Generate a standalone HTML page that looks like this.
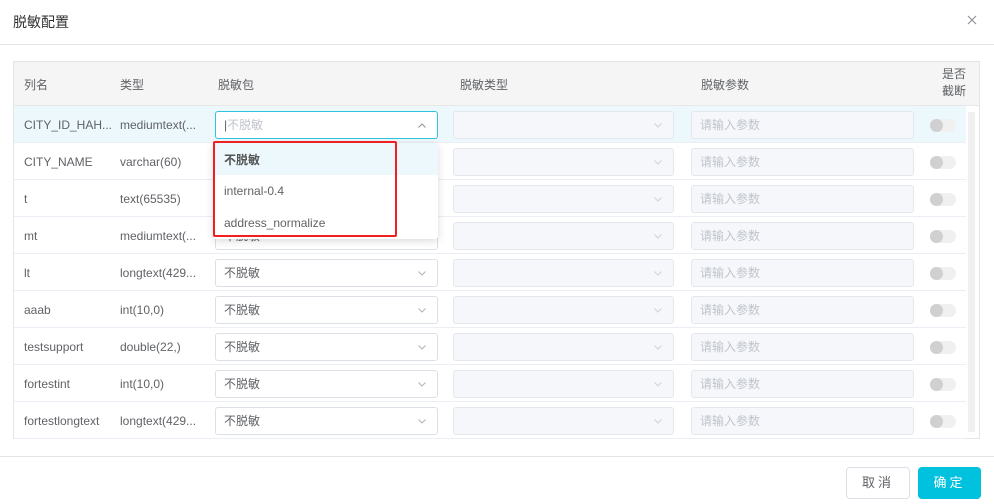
<!DOCTYPE html>
<html><head><meta charset="utf-8"><style>
*{box-sizing:border-box;margin:0;padding:0}
body{width:994px;height:504px;background:#fff;font-family:"Liberation Sans","Noto Sans CJK SC",sans-serif;font-size:12px;color:#606266;position:relative;overflow:hidden}
.a{position:absolute}
.title{left:13px;top:12px;font-size:14px;color:#303133}
.hl{left:0;top:44px;width:994px;height:1px;background:#e4e4e4}
.box{left:13px;top:61px;width:967px;height:378px;border:1px solid #e4e4e4}
.th{left:14px;top:62px;width:965px;height:44px;background:#f5f5f5;border-bottom:1px solid #e8e8e8}
.htxt{top:76px;color:#606266}
.row{left:14px;width:952px;height:37px;border-bottom:1px solid #ebeef5}
.sel{width:223px;height:28px;border:1px solid #dcdfe6;border-radius:3px;background:#fff;padding-left:8px;line-height:26px;color:#606266}
.dis{width:221px;height:28px;border:1px solid #e4e7ed;border-radius:3px;background:#f5f7fa;padding-left:8px;line-height:26px;color:#c0c4cc}
.sel svg,.dis svg{position:absolute;right:11px;top:11px}
.tg{width:26px;height:13px;border-radius:7px;background:#f0f0f0}
.tg:before{content:"";position:absolute;left:0;top:0;width:13px;height:13px;border-radius:50%;background:#d0d0d0}
.btn{top:467px;height:32px;border-radius:4px;text-align:center;line-height:32px;font-size:13px;letter-spacing:3px}
</style></head><body>
<div class="a title">脱敏配置</div>
<svg class="a" style="left:967px;top:15px" width="10" height="10" viewBox="0 0 10 10"><path d="M1 1L9 9M9 1L1 9" stroke="#909399" stroke-width="1.2"/></svg>
<div class="a hl"></div>
<div class="a box"></div>
<div class="a th"></div>
<div class="a htxt" style="left:24px">列名</div>
<div class="a htxt" style="left:120px">类型</div>
<div class="a htxt" style="left:218px">脱敏包</div>
<div class="a htxt" style="left:460px">脱敏类型</div>
<div class="a htxt" style="left:701px">脱敏参数</div>
<div class="a" style="left:942px;top:66px;line-height:17px">是否<br>截断</div>
<div class="a" style="left:968px;top:112px;width:7px;height:320px;background:#f0f0f0"></div>

<div class="a row" style="top:106px;background:#ecf8fc"></div>
<div id="rows"></div>
<script>
var R=[["CITY_ID_HAH...","mediumtext(..."],["CITY_NAME","varchar(60)"],["t","text(65535)"],["mt","mediumtext(..."],["lt","longtext(429..."],["aaab","int(10,0)"],["testsupport","double(22,)"],["fortestint","int(10,0)"],["fortestlongtext","longtext(429..."]];
var dn='<svg width="8" height="5" viewBox="0 0 8 5"><path d="M0.5 0.5L4 4L7.5 0.5" fill="none" stroke="#b0b3b8" stroke-width="1"/></svg>';
var dd='<svg width="8" height="5" viewBox="0 0 8 5"><path d="M0.5 0.5L4 4L7.5 0.5" fill="none" stroke="#d0d3d8" stroke-width="1"/></svg>';
var up='<svg width="8" height="5" viewBox="0 0 8 5"><path d="M0.5 4.5L4 1L7.5 4.5" fill="none" stroke="#909399" stroke-width="1"/></svg>';
var h="";
R.forEach(function(r,i){var y=106+i*37;
if(i>0)h+='<div class="a row" style="top:'+y+'px"></div>';
h+='<div class="a" style="left:24px;top:'+(y+12)+'px">'+r[0]+'</div>';
h+='<div class="a" style="left:120px;top:'+(y+12)+'px">'+r[1]+'</div>';
if(i==0)h+='<div class="a sel" style="left:215px;top:'+(y+5)+'px;border-color:#2fc3e0;color:#c0c4cc"><span style="color:#606266">|</span>不脱敏'+up+'</div>';
else h+='<div class="a sel" style="left:215px;top:'+(y+5)+'px">不脱敏'+dn+'</div>';
h+='<div class="a dis" style="left:453px;top:'+(y+5)+'px">'+dd+'</div>';
h+='<div class="a dis" style="left:691px;top:'+(y+5)+'px;width:223px">请输入参数</div>';
h+='<div class="a tg" style="left:930px;top:'+(y+13)+'px"></div>';
});
document.getElementById("rows").innerHTML=h;
</script>
<div class="a" style="left:213px;top:143px;width:225px;height:96px;background:#fff;box-shadow:0 2px 8px rgba(0,0,0,.15);border-radius:3px"></div>
<div class="a" style="left:213px;top:143px;width:225px;height:32px;background:#ecf8fc"></div>
<div class="a" style="left:224px;top:151px;font-weight:bold;color:#555">不脱敏</div>
<div class="a" style="left:224px;top:184px">internal-0.4</div>
<div class="a" style="left:224px;top:216px">address_normalize</div>
<div class="a" style="left:213px;top:141px;width:184px;height:96px;border:2px solid #f02020;border-radius:2px"></div>

<div class="a" style="left:0;top:456px;width:994px;height:1px;background:#e4e4e4"></div>
<div class="a btn" style="left:846px;width:64px;border:1px solid #dcdfe6;color:#606266;line-height:30px">取消</div>
<div class="a btn" style="left:918px;width:63px;background:#00c1de;color:#fff">确定</div>
</body></html>
